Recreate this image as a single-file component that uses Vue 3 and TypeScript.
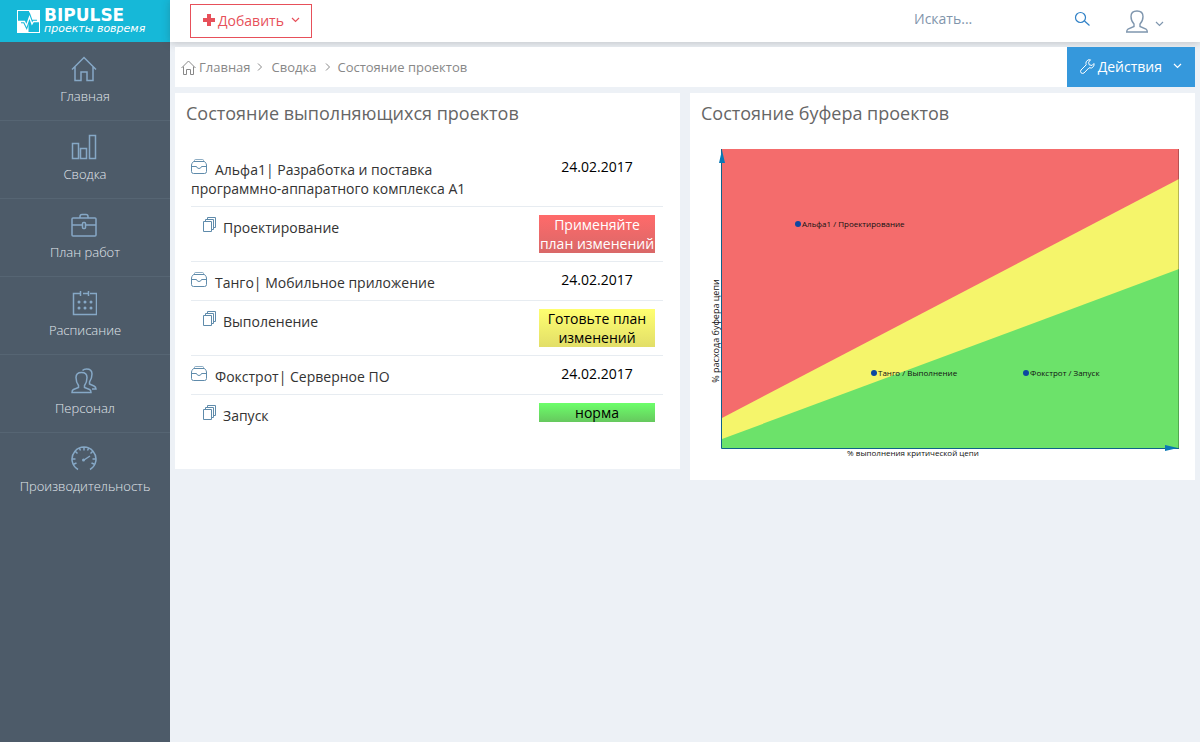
<script setup lang="ts">
interface NavItem {
  label: string
  icon: string
}

interface ProjectRow {
  kind: 'project' | 'stage'
  name: string
  status: string
  tone?: 'red' | 'yellow' | 'green'
}

interface Point {
  x: number
  y: number
  label: string
}

const nav: NavItem[] = [
  { label: 'Главная', icon: 'home' },
  { label: 'Сводка', icon: 'bars' },
  { label: 'План работ', icon: 'case' },
  { label: 'Расписание', icon: 'calendar' },
  { label: 'Персонал', icon: 'users' },
  { label: 'Производительность', icon: 'gauge' },
]

const rows: ProjectRow[] = [
  { kind: 'project', name: 'Альфа1| Разработка и поставка программно-аппаратного комплекса А1', status: '24.02.2017' },
  { kind: 'stage', name: 'Проектирование', status: 'Применяйте план изменений', tone: 'red' },
  { kind: 'project', name: 'Танго| Мобильное приложение', status: '24.02.2017' },
  { kind: 'stage', name: 'Выполенение', status: 'Готовьте план изменений', tone: 'yellow' },
  { kind: 'project', name: 'Фокстрот| Серверное ПО', status: '24.02.2017' },
  { kind: 'stage', name: 'Запуск', status: 'норма', tone: 'green' },
]

const points: Point[] = [
  { x: 97, y: 75, label: 'Альфа1 / Проектирование' },
  { x: 173, y: 224, label: 'Танго / Выполнение' },
  { x: 325, y: 224, label: 'Фокстрот / Запуск' },
]
</script>

<template>
  <div class="page">
    <aside class="sidebar">
      <a class="brand" href="#">
        <svg class="brand-mark" width="23" height="23" viewBox="0 0 23 23" aria-hidden="true">
          <rect x="0.5" y="0.5" width="22" height="22" fill="none" stroke="#fff" />
          <path d="M12 0h11v11.500H12zM0 11.500h11.500V23H0z" fill="#fff" />
          <path d="M4 11.500h3.500l2 4L12.500 7l2.500 7 1.500-2.500H20" fill="none" stroke="#16b8d8" stroke-width="3.500" />
          <path d="M0 11.500h7.500l2 4L12.500 7l2.500 7 1.500-2.500H23" fill="none" stroke="#fff" stroke-width="1.300" />
        </svg>
        <span class="brand-text">
          <span class="brand-name">BIPULSE</span>
          <span class="brand-tag">проекты вовремя</span>
        </span>
      </a>
      <nav class="nav">
        <a v-for="item in nav" :key="item.label" class="nav-item" href="#">
          <svg class="nav-icon" width="26" height="26" viewBox="0 0 26 26" aria-hidden="true">
            <path v-if="item.icon === 'home'" d="M1 13.500 13 1.500l12 12M4 11v13.500h6V16h6v8.500h6V11" />
            <path v-else-if="item.icon === 'bars'" d="M1.500 9.500h6v15h-6zM9.500 14.500h6v10h-6zM18.500 1.500h6v23h-6z" />
            <g v-else-if="item.icon === 'case'">
              <rect x="1" y="6" width="24" height="18" rx="1" />
              <path d="M9 6V4.500Q9 2.500 11 2.500h4q2 0 2 2V6M1 13h10M15 13h10" />
              <rect x="11.500" y="10.500" width="3" height="6" rx="1" />
            </g>
            <g v-else-if="item.icon === 'calendar'">
              <path d="M9 3.500H2.500v21h23v-21H19M12 3.500h5M9.500 1v5M17.500 1v5" />
              <path class="dots" d="M8 12h.01M14 12h.01M20 12h.01M8 18h.01M14 18h.01M20 18h.01" />
            </g>
            <g v-else-if="item.icon === 'users'">
              <path d="M7.500 17.500Q5 14 5 9.500 5 4.500 10.500 4.500T16 9.500q0 4.500-2.500 8v2l5 2q1.500.700 1.500 3H1q0-2.300 1.500-3l5-2z" />
              <path d="M11.500 2.500Q13 1 15.500 1 21 1 21 6q0 4.500-2.500 8v2l4.500 2q2 .900 2 3h-4" />
            </g>
            <g v-else>
              <path d="M7 23.500A12 12 0 1 1 19 23.500M13 14l6-4M13 1.500v3M1.500 13h3M21.500 13h3M4.500 5.500l2 2M21.500 5.500l-2 2M3 18l2.500-1M23 18l-2.500-1M8.500 2.500l1 2M17.500 2.500l-1 2" />
              <circle class="hub" cx="12.500" cy="14" r="1.500" />
            </g>
          </svg>
          <span>{{ item.label }}</span>
        </a>
      </nav>
    </aside>

    <div class="main">
      <header class="topbar">
        <button class="add" type="button">
          <svg width="12" height="12" viewBox="0 0 12 12" aria-hidden="true"><path d="M4 0h4v4h4v4H8v4H4V8H0V4h4z" fill="currentColor" /></svg>
          <span>Добавить</span>
          <svg class="caret" width="9" height="6" viewBox="0 0 9 6" aria-hidden="true"><path d="M1 1l3.500 3.500L8 1" /></svg>
        </button>
        <form class="search" role="search" @submit.prevent>
          <input type="text" placeholder="Искать..." aria-label="Искать" />
          <button type="submit" aria-label="Найти">
            <svg width="16" height="16" viewBox="0 0 16 16" aria-hidden="true"><circle cx="6.500" cy="6.500" r="5" /><path d="M10.500 10 15.500 14.500" /></svg>
          </button>
        </form>
        <button class="account" type="button" aria-label="Профиль">
          <svg class="person" width="22" height="23" viewBox="0 0 22 23" aria-hidden="true"><path d="M8 14Q5 11 5 6.500 5 1 11 1t6 5.500Q17 11 14 14v2.500l6 2.500q1.300.800 1.300 3H.7q0-2.200 1.300-3l6-2.500z" /></svg>
          <svg class="caret" width="9" height="6" viewBox="0 0 9 6" aria-hidden="true"><path d="M1 1l3.500 3.500L8 1" /></svg>
        </button>
      </header>

      <main class="content">
        <div class="crumb-bar">
          <nav class="crumbs" aria-label="Навигация">
            <a class="crumb-home" href="#">
              <svg width="15" height="15" viewBox="0 0 15 15" aria-hidden="true"><path d="M.5 8 7.500 1l7 7M2.500 6.500v8h3v-5h4v5h3v-8" /></svg>
              <span>Главная</span>
            </a>
            <svg width="6" height="8" viewBox="0 0 6 8" aria-hidden="true"><path d="M1 .5 4.500 4 1 7.500" /></svg>
            <a class="crumb-mid" href="#">Сводка</a>
            <svg width="6" height="8" viewBox="0 0 6 8" aria-hidden="true"><path d="M1 .5 4.500 4 1 7.500" /></svg>
            <span>Состояние проектов</span>
          </nav>
          <button class="actions" type="button">
            <svg width="15" height="15" viewBox="0 0 15 15" aria-hidden="true"><path d="M10.500.8Q7.500 0 6.200 2.800q-.6 1.500 0 3L1 11q-1 1.500 0 2.800 1.500 1.200 3 .2l5-5.200q3 1 4.500-1.300.9-1.500.4-3L12 6.500 9.200 5.800 8.600 3.200z" /></svg>
            <span>Действия</span>
            <svg class="caret" width="9" height="6" viewBox="0 0 9 6" aria-hidden="true"><path d="M1 1l3.500 3.500L8 1" /></svg>
          </button>
        </div>

        <div class="panels">
          <section class="panel list-panel">
            <h2>Состояние выполняющихся проектов</h2>
            <table class="projects">
              <tbody>
                <tr v-for="row in rows" :key="row.name">
                  <td class="name" :class="row.kind">
                    <svg v-if="row.kind === 'project'" class="row-icon" width="16" height="18" viewBox="0 -2 16 18" aria-hidden="true">
                      <path d="M3.500 2.500v-1q0-1 1-1h7q1 0 1 1v1" stroke-opacity="0.7" />
                      <path d="M2.500 2.500h11q2 2 2 3.500v6.500q0 2-2 2h-11q-2 0-2-2V6q0-1.500 2-3.500zM.5 7.500H5.500q.5 2 2.500 2t2.500-2h5" />
                    </svg>
                    <svg v-else class="row-icon" width="14" height="18" viewBox="0 -2 14 18" aria-hidden="true">
                      <path d="M.5 4.500h8v10h-8zM2.500 4.500v-2h8v10h-2M4.500 2.500v-2h8v10h-2" />
                    </svg>
                    <a href="#">{{ row.name }}</a>
                  </td>
                  <td class="status">
                    <div v-if="row.tone" class="badge" :class="row.tone">{{ row.status }}</div>
                    <template v-else>{{ row.status }}</template>
                  </td>
                </tr>
              </tbody>
            </table>
          </section>

          <section class="panel">
            <h2>Состояние буфера проектов</h2>
            <svg class="chart" viewBox="0 0 479 316" role="img" aria-label="Состояние буфера проектов">
              <path d="M21 0h457v299H21z" fill="#f46c6c" />
              <path d="M21 269 478 30v269H21z" fill="#f5f56b" />
              <path d="M21 290 478 120v179H21z" fill="#6ce26a" />
              <path d="M477.500 0v299" stroke="#000" stroke-opacity="0.25" />
              <path d="M20.500 0v299.500H478" fill="none" stroke="#0f6289" />
              <path d="M21 1l3 13h-6zM477 299l-13-3v6z" fill="#0a78b5" />
              <g v-for="point in points" :key="point.label">
                <circle :cx="point.x" :cy="point.y" r="3" fill="#0d47a1" />
                <text :x="point.x + 4" :y="point.y + 3" font-size="8">{{ point.label }}</text>
              </g>
              <text x="212" y="307" text-anchor="middle" font-size="8">% выполнения критической цепи</text>
              <text transform="translate(18 182) rotate(-90)" text-anchor="middle" font-size="9">% расхода буфера цепи</text>
            </svg>
          </section>
        </div>
      </main>
    </div>
  </div>
</template>

<style>
body {
  background: #edf1f6;
}
</style>

<style scoped>
* {
  box-sizing: border-box;
}

.page {
  display: flex;
  min-height: 100vh;
  font-family: "Open Sans", "Noto Sans", sans-serif;
  font-size: 14px;
  line-height: 19px;
  color: #333;
}

a {
  color: inherit;
  text-decoration: none;
}

button {
  font: inherit;
  border: 0;
  background: none;
  padding: 0;
  cursor: pointer;
}

svg {
  fill: none;
  stroke: currentColor;
  flex: none;
}

.sidebar {
  flex: none;
  width: 170px;
  background: #4d5b69;
}

.brand {
  display: flex;
  align-items: center;
  gap: 4px;
  height: 42px;
  padding-left: 17px;
  background: #16b8d8;
  color: #fff;
}

.brand-mark,
.add > svg:first-child {
  stroke: none;
}

.brand-text {
  display: flex;
  flex-direction: column;
  font-family: "DejaVu Sans", sans-serif;
  white-space: nowrap;
}

.brand-name {
  font-size: 17px;
  font-weight: 700;
  line-height: 16px;
}

.brand-tag {
  font-size: 11px;
  font-style: italic;
  line-height: 12px;
}

.nav-item {
  display: flex;
  flex-direction: column;
  align-items: center;
  gap: 5px;
  height: 78px;
  padding-top: 14px;
  color: #e0e6ec;
  font-size: 13px;
  font-weight: 300;
}

.nav-item + .nav-item {
  padding-top: 13px;
  border-top: 1px solid #566573;
}

.nav-icon {
  color: #86a8c6;
  stroke-width: 1.500;
  margin-right: 3px;
}

.dots {
  stroke-width: 3;
  stroke-linecap: round;
}

.hub {
  fill: currentColor;
  stroke: none;
}

.main {
  flex: 1;
  min-width: 0;
}

.topbar {
  display: flex;
  align-items: center;
  height: 42px;
  padding: 0 36px 0 20px;
  background: #fff;
  box-shadow: 0 1px 8px rgba(50, 50, 50, 0.25);
}

.caret {
  stroke-width: 1.200;
}

.add {
  display: flex;
  align-items: center;
  height: 34px;
  padding: 0 11px 2px 12px;
  gap: 3px;
  border: 1px solid #e7505a;
  color: #e7505a;
}

.add .caret {
  margin-left: 4px;
}

.search {
  display: flex;
  align-items: center;
  margin-left: auto;
  margin-right: 36px;
  padding-bottom: 5px;
}

.search input {
  width: 160px;
  padding: 0;
  border: 0;
  outline: 0;
  background: none;
  font: inherit;
  color: #768ca3;
}

.search input::placeholder {
  color: #8195ab;
  opacity: 1;
}

.search button {
  display: flex;
  color: #2f80c6;
}

.search svg {
  stroke-width: 1.200;
}

.account {
  display: flex;
  align-items: center;
  gap: 7px;
  color: #7f96ae;
}

.person {
  stroke-width: 1.400;
}

.account .caret {
  margin-top: 6px;
}

.content {
  padding: 5px;
}

.crumb-bar {
  display: flex;
  align-items: stretch;
  justify-content: space-between;
  height: 40px;
  background: #fff;
}

.crumbs {
  display: flex;
  align-items: center;
  gap: 6px;
  padding-left: 6px;
  font-size: 13px;
  color: #888;
}

.crumb-home {
  display: flex;
  align-items: center;
  gap: 3px;
}

.crumb-mid {
  margin: 0 3px;
}

.actions {
  display: flex;
  align-items: center;
  gap: 3px;
  padding: 0 13px 2px;
  background: #3598dc;
  color: #fff;
}

.actions .caret {
  margin-left: 8px;
}

.panels {
  display: grid;
  grid-template-columns: 1fr 1fr;
  align-items: start;
  gap: 10px;
  margin-top: 6px;
}

.panel {
  padding: 8px 15px 15px 11px;
  background: #fff;
}

.list-panel {
  padding-bottom: 36px;
}

h2 {
  margin: 0 0 23px;
  font-size: 18px;
  font-weight: 400;
  line-height: 25px;
  color: #666;
}

.projects {
  width: calc(100% - 7px);
  margin-left: 5px;
  border-collapse: collapse;
  table-layout: fixed;
}

.projects td {
  padding: 8px 8px 8px 0;
  vertical-align: top;
}

.projects tr + tr td {
  border-top: 1px solid #e7ecf1;
}

.row-icon {
  color: #5f8bab;
  margin-right: 4px;
}

.project .row-icon {
  margin-right: 8px;
}

.stage .row-icon {
  margin-right: 6px;
}

.projects .stage {
  padding-left: 12px;
}

.projects .status {
  width: 132px;
  padding-left: 8px;
  text-align: center;
  color: #000;
}

.badge.red {
  background: linear-gradient(#ff6a6a, #d96868);
  color: #fff;
}

.badge.yellow {
  background: linear-gradient(#ffff70, #e2de68);
}

.badge.green {
  background: linear-gradient(#6cff6a, #66c85e);
}

.chart {
  display: block;
  width: 100%;
  height: auto;
  stroke: none;
}

.chart text {
  fill: #111;
}
</style>
